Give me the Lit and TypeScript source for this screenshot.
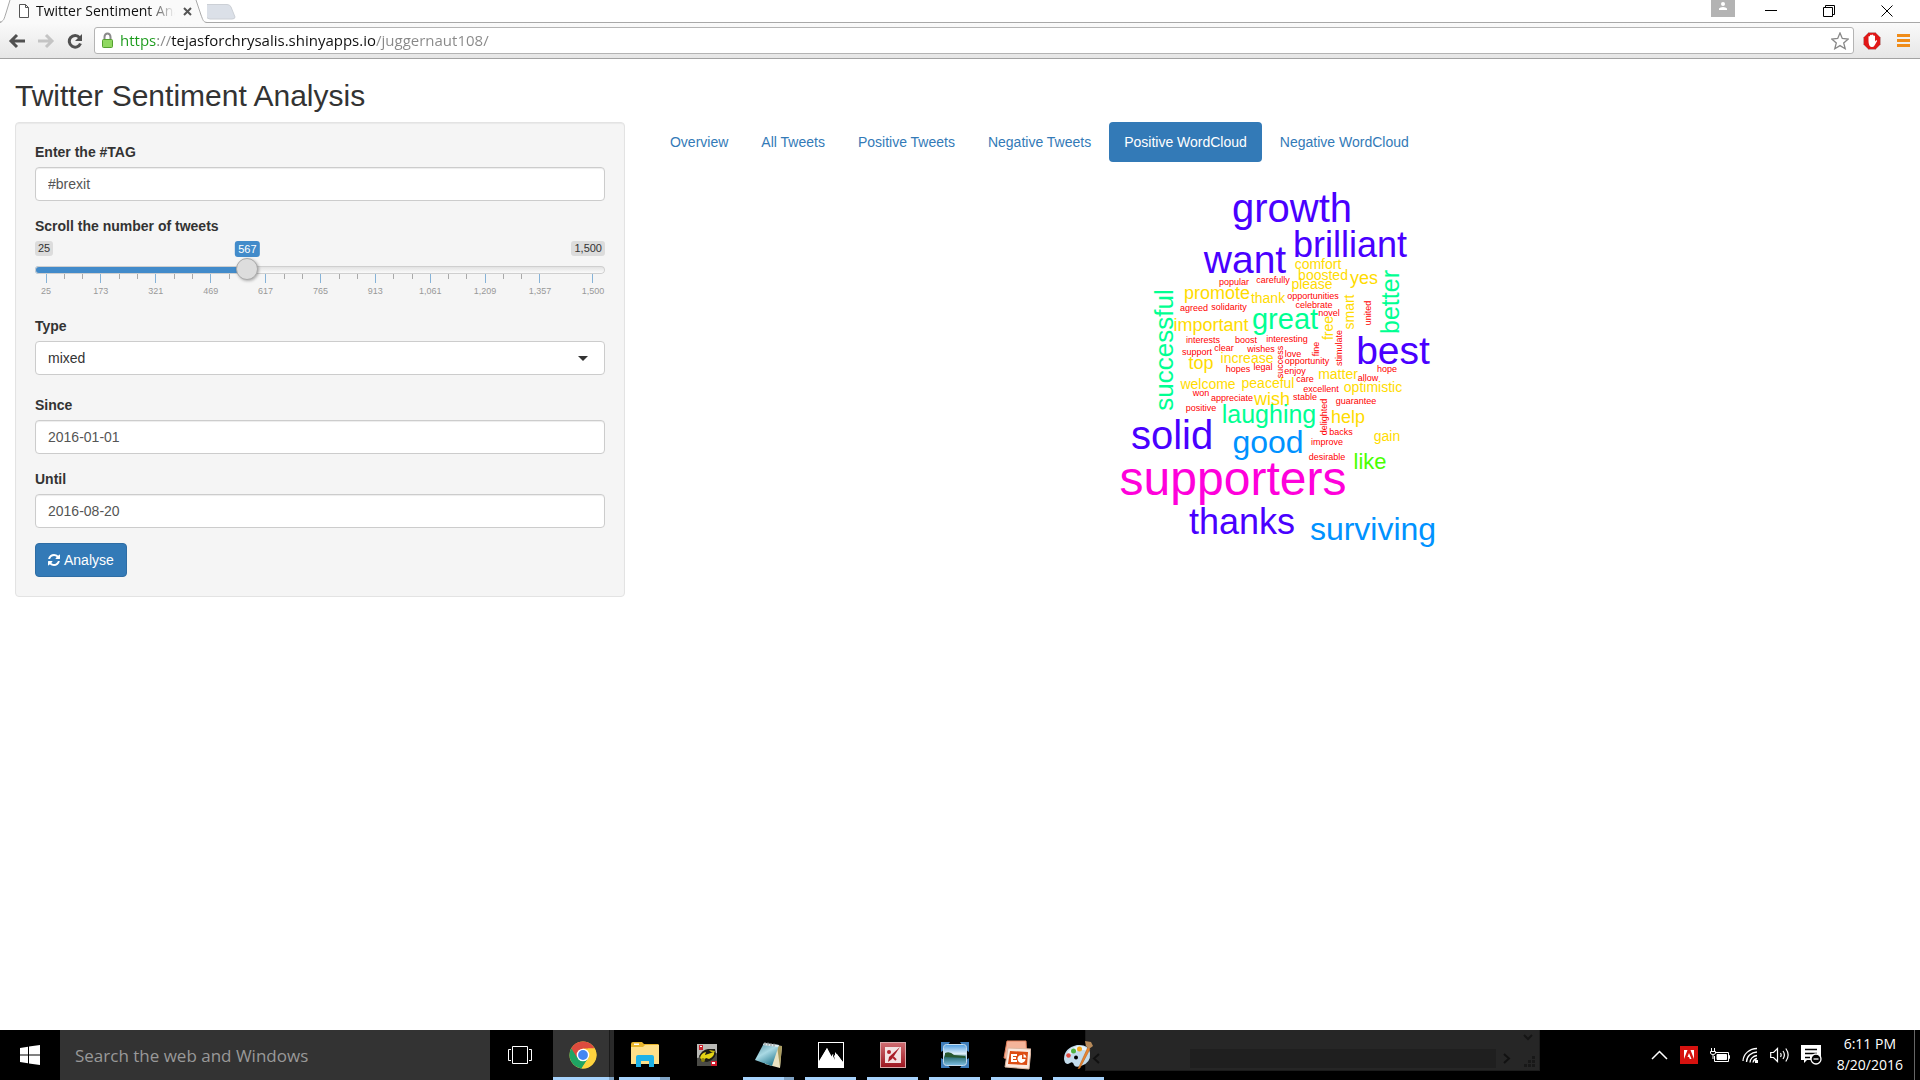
import { LitElement, html, css, svg } from "lit";
import { customElement, state } from "lit/decorators.js";

type Word = [text: string, x: number, y: number, size: number, upright?: boolean];

/* Words grouped by frequency colour; upright words read bottom to top. */
const CLOUD: { color: string; words: Word[] }[] = [
  { color: "#ff00db", words: [["supporters", 1233, 495, 48]] },
  {
    color: "#4900ff",
    words: [
      ["growth", 1292, 222, 40],
      ["brilliant", 1350, 257, 36],
      ["want", 1245, 273, 39],
      ["best", 1393, 364, 39],
      ["solid", 1172, 449, 40],
      ["thanks", 1242, 534, 36],
    ],
  },
  { color: "#0092ff", words: [["good", 1268, 453, 32], ["surviving", 1373, 540, 32]] },
  {
    color: "#00ff92",
    words: [
      ["laughing", 1269, 423, 25],
      ["great", 1285, 329, 29],
      ["successful", 1173, 350, 26, true],
      ["better", 1399, 302, 25, true],
    ],
  },
  { color: "#49ff00", words: [["like", 1370, 469, 22]] },
  {
    color: "#ffdb00",
    words: [
      ["help", 1348, 423, 18],
      ["wish", 1272, 405, 18],
      ["yes", 1364, 284, 18],
      ["top", 1201, 369, 18],
      ["promote", 1217, 299, 18],
      ["important", 1211, 331, 18],
      ["thank", 1268, 303, 14],
      ["comfort", 1318, 269, 14],
      ["boosted", 1323, 280, 14],
      ["please", 1312, 289, 14],
      ["increase", 1247, 363, 14],
      ["smart", 1354, 312, 14, true],
      ["free", 1333, 328, 14, true],
      ["matter", 1338, 379, 14],
      ["optimistic", 1373, 392, 14],
      ["welcome", 1208, 389, 14],
      ["peaceful", 1268, 388, 14],
      ["gain", 1387, 441, 14],
    ],
  },
  {
    color: "#ff0000",
    words: [
      ["popular", 1234, 285, 9],
      ["carefully", 1273, 283, 9],
      ["opportunities", 1313, 299, 9],
      ["celebrate", 1314, 308, 9],
      ["agreed", 1194, 311, 9],
      ["solidarity", 1229, 310, 9],
      ["novel", 1329, 316, 9],
      ["interests", 1203, 343, 9],
      ["boost", 1246, 343, 9],
      ["interesting", 1287, 342, 9],
      ["support", 1197, 355, 9],
      ["clear", 1224, 351, 9],
      ["wishes", 1261, 352, 9],
      ["love", 1293, 357, 9],
      ["opportunity", 1307, 364, 9],
      ["fine", 1319, 349, 9, true],
      ["stimulate", 1342, 348, 9, true],
      ["united", 1371, 313, 9, true],
      ["success", 1283, 362, 9, true],
      ["hopes", 1238, 372, 9],
      ["legal", 1263, 370, 9],
      ["enjoy", 1295, 374, 9],
      ["care", 1305, 382, 9],
      ["hope", 1387, 372, 9],
      ["allow", 1368, 381, 9],
      ["excellent", 1321, 392, 9],
      ["won", 1201, 396, 9],
      ["appreciate", 1232, 401, 9],
      ["stable", 1305, 400, 9],
      ["positive", 1201, 411, 9],
      ["guarantee", 1356, 404, 9],
      ["delighted", 1327, 417, 9, true],
      ["backs", 1341, 435, 9],
      ["improve", 1327, 445, 9],
      ["desirable", 1327, 460, 9],
    ],
  },
];

const MIN = 25;
const MAX = 1500;
const STEP = 148;

@customElement("browser-chrome")
class BrowserChrome extends LitElement {
  static styles = css`
    :host {
      display: block;
      font-family: "Segoe UI", "Open Sans", "Noto Sans", sans-serif;
    }
    svg { display: block; flex: none; }
    button {
      border: 0;
      padding: 0;
      background: none;
      display: grid;
      place-items: center;
    }
    .strip {
      display: flex;
      height: 22px;
      background: #fff;
      border-bottom: 1px solid #a8a8a8;
    }
    .tab {
      position: relative;
      width: 207px;
      height: 23px;
    }
    .tab-shape { position: absolute; inset: 0; }
    .tab-row {
      position: relative;
      display: flex;
      align-items: center;
      height: 22px;
      padding: 0 14px 0 18px;
      gap: 6px;
    }
    .tab-title {
      flex: 1;
      overflow: hidden;
      white-space: nowrap;
      font-size: 14px;
      line-height: 22px;
      color: #111;
      -webkit-mask-image: linear-gradient(90deg, #000 80%, transparent);
      mask-image: linear-gradient(90deg, #000 80%, transparent);
    }
    .tab-close { width: 12px; height: 22px; }
    .window-controls {
      display: flex;
      margin-left: auto;
      padding-right: 4px;
    }
    .profile { width: 24px; height: 17px; background: #b3b3b3; margin-right: 7px; }
    .ctl { width: 58px; height: 22px; }
    .bar {
      display: flex;
      align-items: center;
      height: 35px;
      padding: 0 6px 0 8px;
      background: linear-gradient(#fafafa, #e6e6e6);
      border-bottom: 1px solid #a3a3a3;
    }
    .nav { display: flex; gap: 11px; margin-right: 10px; }
    .nav button { width: 18px; height: 22px; }
    .omnibox {
      flex: 1;
      display: flex;
      align-items: center;
      gap: 6px;
      height: 25px;
      padding: 0 4px 0 6px;
      background: #fff;
      border: 1px solid #b4b4b4;
      border-radius: 3px;
    }
    .url {
      flex: 1;
      min-width: 0;
      height: 25px;
      border: 0;
      padding: 0;
      outline: 0;
      font: 15px/25px "Segoe UI", "Open Sans", "Noto Sans", sans-serif;
      color: transparent;
      background: linear-gradient(90deg, #1a9a1a 37px, #888 37px 51px, #111 51px 255px, #888 255px);
      -webkit-background-clip: text;
      background-clip: text;
    }
    .extras { display: flex; gap: 12px; margin-left: 8px; }
    .extras button { width: 20px; height: 22px; }
  `;

  render() {
    return html`
      <div class="strip">
        <div class="tab">
          <svg class="tab-shape" width="207" height="23" viewBox="0 0 207 23">
            <path d="M0 23C4 22 4 19 6 13L10 0H196L201 15C203 20 203 22 207 23Z" fill="#fafafa" />
            <path d="M0 22C4 21 4 19 6 13L10 0M196 0L201 15C203 20 203 22 207 22.500" fill="none" stroke="#a8a8a8" />
          </svg>
          <div class="tab-row">
            <svg width="12" height="16" viewBox="0 0 12 16" fill="#fff" stroke="#555">
              <path d="M1.500 1.500H7.500L10.500 4.500V14.500H1.500ZM7.500 1.500V4.500H10.500" />
            </svg>
            <span class="tab-title">Twitter Sentiment Analysis</span>
            <button class="tab-close" aria-label="Close tab">
              <svg width="9" height="9" viewBox="0 0 9 9" stroke="#555" stroke-width="2"><path d="M1 1L8 8M8 1L1 8" /></svg>
            </button>
          </div>
        </div>
        <button aria-label="New tab">
          <svg width="30" height="18" viewBox="5 1 30 18">
            <path d="M1 3.500H25Q28 3.500 29 6L33 16Q33 18 30 18H8Q5 18 4 15L1 5Z" fill="#dbe0e8" stroke="#ccd0d6" />
          </svg>
        </button>
        <div class="window-controls">
          <button class="profile" aria-label="Profile">
            <svg width="24" height="17" viewBox="0 0 24 17" fill="#fff"><circle cx="12" cy="4" r="2" /><path d="M8 10V8.500Q9 7 12 7T16 8.500V10Z" /></svg>
          </button>
          <button class="ctl" aria-label="Minimize">
            <svg width="12" height="12" viewBox="0 0 12 12"><path d="M0 5.500H12" stroke="#000" /></svg>
          </button>
          <button class="ctl" aria-label="Restore">
            <svg width="12" height="12" viewBox="0 0 12 12" fill="none" stroke="#000"><path d="M.5 2.500H9.500V11.500H.5ZM2.500 2.500V.5H11.500V9.500H9.500" /></svg>
          </button>
          <button class="ctl" aria-label="Close">
            <svg width="12" height="12" viewBox="0 0 12 12" stroke="#000"><path d="M.5 .5L11.500 11.500M11.500 .5L.5 11.500" /></svg>
          </button>
        </div>
      </div>
      <div class="bar">
        <div class="nav">
          <button aria-label="Back">
            <svg width="18" height="16" viewBox="0 0 18 16" fill="none" stroke="#505050" stroke-width="3"><path d="M17 8H4M9 2L3 8L9 14" /></svg>
          </button>
          <button aria-label="Forward">
            <svg width="18" height="16" viewBox="0 0 18 16" fill="none" stroke="#c4c4c4" stroke-width="3"><path d="M1 8H14M9 2L15 8L9 14" /></svg>
          </button>
          <button aria-label="Reload">
            <svg width="18" height="16" viewBox="0 0 18 16" fill="none"><path d="M13.500 4.500A5.800 5.800 0 1 0 14.500 10.500" stroke="#505050" stroke-width="3" /><path d="M16 1V8H9Z" fill="#505050" /></svg>
          </button>
        </div>
        <div class="omnibox">
          <svg width="13" height="17" viewBox="0 0 13 17">
            <path d="M3.500 8V5A3 3.500 0 0 1 9.500 5V8" fill="none" stroke="#8a8a8a" stroke-width="2" />
            <rect x="1.500" y="7.500" width="10" height="8" rx="1" fill="#8fd860" stroke="#55a030" />
          </svg>
          <input class="url" type="text" aria-label="Address" spellcheck="false" .value=${"https://tejasforchrysalis.shinyapps.io/juggernaut108/"} />
          <svg width="18" height="18" viewBox="0 0 18 18" fill="none" stroke="#888" stroke-width="1.300">
            <path d="M9 1L11.300 6.500L17.200 7L12.700 10.900L14.200 16.700L9 13.600L3.800 16.700L5.300 10.900L.8 7L6.700 6.500Z" />
          </svg>
        </div>
        <div class="extras">
          <button aria-label="Ad blocker">
            <svg width="18" height="18" viewBox="0 0 18 18">
              <path d="M5.500 .5H12.500L17.500 5.500V12.500L12.500 17.500H5.500L.5 12.500V5.500Z" fill="#e01818" stroke="#c9a0a0" />
              <path d="M5.500 9V4.500Q6.200 3.500 7 4.500V3.200Q7.800 2.200 8.600 3.200V2.800Q9.500 2 10.300 3V3.700Q11.200 3 12 4V9.500L13 8.300Q14.500 8 14 9.300L11.500 13.500Q10.500 15.300 8.500 15Q5.500 14.500 5.500 9Z" fill="#fff" />
            </svg>
          </button>
          <button aria-label="Menu">
            <svg width="14" height="14" viewBox="0 0 14 14" fill="#f08c18"><path d="M0 0H13V3H0ZM0 5H13V8H0ZM0 10H13V13H0Z" /></svg>
          </button>
        </div>
      </div>
    `;
  }
}

@customElement("tweet-slider")
class TweetSlider extends LitElement {
  static styles = css`
    :host { display: block; }
    .label { display: block; margin-bottom: 5px; font-weight: 700; }
    .box { position: relative; height: 60px; }
    .ends { display: flex; justify-content: space-between; height: 17px; align-items: flex-start; }
    .badge {
      padding: 0 3px;
      border-radius: 3px;
      font-size: 11px;
      line-height: 15px;
      color: #333;
      background: #dcdcdc;
    }
    .value {
      position: absolute;
      top: 0;
      transform: translateX(-50%);
      line-height: 16px;
      color: #fff;
      background: #428bca;
    }
    .range {
      -webkit-appearance: none;
      appearance: none;
      display: block;
      width: 100%;
      height: 22px;
      margin: 0;
      background: none;
      position: relative;
    }
    .range::-webkit-slider-runnable-track {
      height: 8px;
      margin-top: 1px;
      border-radius: 8px;
      box-shadow: inset 0 0 0 1px #cfcfcf;
      background: linear-gradient(90deg, #428bca var(--fill), transparent var(--fill)), linear-gradient(#dedede, #fff);
    }
    .range::-webkit-slider-thumb {
      -webkit-appearance: none;
      width: 22px;
      height: 22px;
      margin-top: -8px;
      border: 1px solid #aaa;
      border-radius: 50%;
      background: #ddd;
      box-shadow: 1px 1px 3px rgba(0, 0, 0, 0.3);
    }
    .grid { padding: 0 12px 0 11px; margin-top: -6px; }
    .grid svg { display: block; width: 100%; height: 24px; overflow: visible; }
    .minor { stroke: #aaa; }
    .major { stroke: #86b3d8; }
    .tick { font-size: 9px; fill: #999; text-anchor: middle; }
  `;

  @state() private value = 567;

  private at(v: number) {
    return `${((v - MIN) / (MAX - MIN)) * 100}%`;
  }

  render() {
    const f = (this.value - MIN) / (MAX - MIN);
    const pos = `calc(11px + (100% - 22px) * ${f})`;
    const stops = [...Array.from({ length: 10 }, (_, i) => MIN + i * STEP), MAX];
    const minors = stops.slice(0, 9).flatMap((s) => [s + STEP * 0.34, s + STEP * 0.67]);
    return html`
      <label class="label" for="count">Scroll the number of tweets</label>
      <div class="box">
        <div class="ends"><span class="badge">25</span><span class="badge">1,500</span></div>
        <span class="badge value" style="left:${pos}">${this.value}</span>
        <input class="range" id="count" type="range" min=${MIN} max=${MAX}
          .value=${String(this.value)} style="--fill:${pos}"
          @input=${(e: Event) => (this.value = Number((e.target as HTMLInputElement).value))} />
        <div class="grid">
          <svg shape-rendering="crispEdges">
            ${minors.map((m) => svg`<line class="minor" x1=${this.at(m)} x2=${this.at(m)} y1="0" y2="5" />`)}
            ${stops.map(
              (s) => svg`<line class="major" x1=${this.at(s)} x2=${this.at(s)} y1="0" y2="9" />
              <text class="tick" x=${this.at(s)} y="20">${s.toLocaleString("en-US")}</text>`,
            )}
          </svg>
        </div>
      </div>
    `;
  }
}

@customElement("word-cloud")
class WordCloud extends LitElement {
  static styles = css`
    :host { display: block; }
    svg { display: block; width: 100%; height: 400px; }
    text { text-anchor: middle; font-family: "Liberation Sans", Helvetica, Arial, sans-serif; }
  `;

  render() {
    return html`
      <svg viewBox="655 162 1250 400" role="img" aria-label="Positive words">
        ${CLOUD.map(
          (g) => svg`<g fill=${g.color}>${g.words.map(
            ([t, x, y, size, up]) =>
              svg`<text font-size=${size} transform="translate(${x} ${y})${up ? " rotate(-90)" : ""}">${t}</text>`,
          )}</g>`,
        )}
      </svg>
    `;
  }
}

const CHROME_ICON = svg`<svg width="28" height="28" viewBox="0 0 28 28">
  <circle cx="14" cy="14" r="13.500" fill="#fdd23e"/>
  <path d="M14 14L2.300 7.250A13.500 13.500 0 0 0 12.500 27.400L20 16Z" fill="#1fa463"/>
  <path d="M2.300 7.250A13.500 13.500 0 0 1 25.700 7.500H14L8 16.500Z" fill="#dd4b3e"/>
  <path d="M25.700 7.500A13.500 13.500 0 0 1 12.500 27.400L19.500 17L19 7.500Z" fill="#fdd23e"/>
  <circle cx="14" cy="14" r="6.300" fill="#fff"/><circle cx="14" cy="14" r="4.900" fill="#4487f2"/></svg>`;

const FOLDER_ICON = svg`<svg width="28" height="26" viewBox="0 0 28 26">
  <path d="M0 2Q0 0 2 0H11L13 2H27Q28 2 28 4V22H0Z" fill="#e8b52c"/>
  <path d="M3 1.500H8V3H3Z" fill="#fff"/><path d="M0 5H12L14 3H28V22H0Z" fill="#ffe08a"/>
  <path d="M5 25V15Q5 13 7 13H21Q23 13 23 15V25H18V19H10V25Z" fill="#1fb2e8"/></svg>`;

const CAR_ICON = svg`<svg width="20" height="22" viewBox="0 0 20 22">
  <rect width="20" height="22" fill="#b9b9b5"/><path d="M0 14L20 9V22H0Z" fill="#4b4b46"/>
  <path d="M2 12Q5 6 11 5L18 5L19 10Q17 16 10 18L4 17Z" fill="#1d1d15"/>
  <path d="M3 14Q4 9 9 8L8 11L17 8Q18 12 12 15L9 14L6 17Z" fill="#e3d414"/>
  <path d="M12 6L18 7L17 9L14 8Z" fill="#c8ba10"/><circle cx="6" cy="16" r="2" fill="#8f860f"/>
  <path d="M2 1H6V6H2Z" fill="#c8202a"/><path d="M3 2H5V3H3Z" fill="#fff"/><path d="M14 17H20V22H14Z" fill="#d01a2c"/><path d="M15 18H18V20H15Z" fill="#fff"/></svg>`;

const NOTEPAD_ICON = svg`<svg width="28" height="28" viewBox="0 0 28 28">
  <defs><linearGradient id="np" x2=".6" y2="1"><stop stop-color="#4f8b9d"/><stop offset=".5" stop-color="#a9d9e4"/><stop offset="1" stop-color="#2f8096"/></linearGradient></defs>
  <path d="M12 3L27 5L25 27L10 23Z" fill="#e9e2c2"/><path d="M22 5L27 5L25 26Z" fill="#a99b5e"/>
  <path d="M9 2L24 4L17 25L0 19Z" fill="url(#np)"/><path d="M9 2L24 4L23 6L8 4Z" fill="#dfe9ec"/>
  <path d="M10 1V4M13 1.500V4.500M16 2V5M19 2.500V5.500" stroke="#888"/></svg>`;

const MOUNTAIN_ICON = svg`<svg width="26" height="26" viewBox="0 0 26 26">
  <rect width="26" height="26" fill="#fff"/><path d="M1 1H25V20L19 11L17 14L15 12L13 15L9 6L1 19Z" fill="#000"/>
  <path d="M1 20L9 6L14 15L15 12L24 23V25H1Z" fill="#fff"/><path d="M15 14L17 18L15.500 12L19 12L25 20V9H15Z" fill="#000"/>
  <path d="M17 10L25 20V22L17 14Z" fill="#fff"/></svg>`;

const TOOLS_ICON = svg`<svg width="26" height="26" viewBox="0 0 26 26">
  <defs><linearGradient id="tl" x2="0" y2="1"><stop stop-color="#cf6d72"/><stop offset="1" stop-color="#9c1620"/></linearGradient></defs>
  <rect x=".5" y=".5" width="25" height="25" fill="url(#tl)" stroke="#d9a9ab"/><rect x="5" y="5" width="16" height="16" fill="#f3e3e3"/>
  <path d="M20 5L12 17L8 20L9 15Z" fill="#a81e28"/><circle cx="9" cy="10" r="2" fill="#b3242e"/>
  <path d="M13 15L16 18" stroke="#b3242e" stroke-width="2"/></svg>`;

const PHOTO_ICON = svg`<svg width="28" height="26" viewBox="0 0 28 26">
  <defs><linearGradient id="ph" x2="0" y2="1"><stop stop-color="#4c9be0"/><stop offset=".45" stop-color="#e4f2fa"/><stop offset=".6" stop-color="#2c6e73"/><stop offset="1" stop-color="#7fc0e6"/></linearGradient></defs>
  <path d="M0 0H9L7 3H3V8L0 10ZM28 0H19L21 3H25V8L28 10ZM0 26H9L7 23H3V18L0 16ZM28 26H19L21 23H25V18L28 16Z" fill="#3d7cba"/>
  <rect x="2.500" y="2.500" width="23" height="21" rx="3" fill="url(#ph)" stroke="#c6dcec"/>
  <path d="M4 15V11Q9 9 13 13L24 14V16Z" fill="#28582f"/></svg>`;

const SLIDES_ICON = svg`<svg width="28" height="30" viewBox="0 0 28 30">
  <path d="M4 1L23 1L24 22L1 18Z" fill="#f4b49a" stroke="#e5825e"/><path d="M5 8L28 9L26 29L2 27Z" fill="#fbe9df" stroke="#dcb7a2"/>
  <path d="M7 11L25 12L24 25L5 24Z" fill="#dd4d14"/><path d="M8 14H14V16H10V17H13V19H10V20H14V22H8Z" fill="#fff"/>
  <path d="M19 15A4 4 0 1 0 22.500 19H19Z" fill="#fff"/><path d="M20.500 14V17.500H23.500Q23 14.500 20.500 14Z" fill="#fff"/></svg>`;

const PAINT_ICON = svg`<svg width="30" height="28" viewBox="0 0 30 28">
  <path d="M13 4Q25 3 26 12Q27 22 17 25Q11 27 10 24Q9 20 6 22Q1 25 0 18Q0 7 13 4Z" fill="#c3dcec"/>
  <path d="M13 5Q22 4 24 10Q14 6 2 17Q3 8 13 5Z" fill="#e6f3fa"/>
  <circle cx="12" cy="16.500" r="2" fill="#000"/><circle cx="4.500" cy="14.500" r="2.300" fill="#e04a3f"/>
  <circle cx="9.500" cy="10" r="2.500" fill="#4fb341"/><circle cx="15.500" cy="8" r="2.500" fill="#f4a71c"/>
  <path d="M24 6L14 28L16 27L26 8Z" fill="#e98530" stroke="#b9631c" stroke-width=".6"/><path d="M21 0L27 1L29 5L25 8L22 5Z" fill="#b78a5a"/></svg>`;

const APPS: { name: string; icon: unknown; state: string }[] = [
  { name: "Chrome", icon: CHROME_ICON, state: "active" },
  { name: "File Explorer", icon: FOLDER_ICON, state: "open multi" },
  { name: "Game", icon: CAR_ICON, state: "" },
  { name: "Notepad", icon: NOTEPAD_ICON, state: "open multi" },
  { name: "Photos", icon: MOUNTAIN_ICON, state: "open" },
  { name: "Tools", icon: TOOLS_ICON, state: "open" },
  { name: "Picture viewer", icon: PHOTO_ICON, state: "open" },
  { name: "Slides", icon: SLIDES_ICON, state: "open" },
  { name: "Paint", icon: PAINT_ICON, state: "open" },
];

@customElement("task-bar")
class TaskBar extends LitElement {
  static styles = css`
    :host {
      display: flex;
      position: relative;
      height: 50px;
      background: #000;
      color: #fff;
      font-family: "Segoe UI", "Open Sans", "Noto Sans", sans-serif;
    }
    svg { display: block; }
    button {
      display: grid;
      place-items: center;
      border: 0;
      padding: 0;
      background: none;
      position: relative;
      color: inherit;
      font: inherit;
    }
    .start { width: 60px; }
    .search {
      width: 430px;
      box-sizing: border-box;
      border: 0;
      padding: 0 15px;
      background: #333;
      font: 17px "Segoe UI", "Open Sans", "Noto Sans", sans-serif;
      outline: 0;
    }
    .search::placeholder { color: #999; opacity: 1; }
    .slot { width: 62px; border-bottom: 3px solid transparent; padding-top: 3px; }
    .open { background: linear-gradient(#a6d2fb, #a6d2fb) 5px 47px / 51px 3px no-repeat border-box; }
    .multi {
      background: linear-gradient(90deg, #a6d2fb 41px, #7fa3c4 41px) 5px 47px / 51px 3px no-repeat border-box;
    }
    .active {
      background:
        linear-gradient(90deg, transparent 1px, #a6d2fb 1px 57px, #7fa3c4 57px) 0 47px / 100% 3px no-repeat border-box,
        linear-gradient(90deg, transparent 1px, #343434 1px 57px, #1a1a1a 57px 58px, #292929 58px) border-box;
    }
    .ghost { position: absolute; left: 1085px; top: 0; }
    .tray { display: flex; align-items: center; margin-left: auto; }
    .tray button { height: 50px; }
    .icons { display: flex; align-items: center; gap: 12px; margin-right: 15px; }
    .tray .clock {
      align-content: center;
      font-size: 14px;
      line-height: 21px;
      padding-bottom: 2px;
      margin-right: 11px;
    }
    .peek { width: 5px; height: 50px; border-left: 1px solid #666; }
  `;

  render() {
    return html`
      <svg class="ghost" width="455" height="41" viewBox="0 0 455 41" fill="none">
        <rect width="455" height="41" fill="#1c1c1c" /><rect x="1" width="453" height="40" fill="#262626" />
        <rect x="105" y="19" width="306" height="19" fill="#1f1f1f" />
        <path d="M14 24L9 28.500L14 33M419 24L424 28.500L419 33" stroke="#111" stroke-width="2" />
        <path d="M439 5L443 9L447 5" stroke="#151515" stroke-width="2" />
        <path d="M447 26h3v3h-3zM443 30h3v3h-3zM447 30h3v3h-3zM439 34h3v3h-3zM443 34h3v3h-3zM447 34h3v3h-3z" fill="#181818" />
      </svg>
      <button class="start" aria-label="Start">
        <svg width="20" height="20" viewBox="0 0 20 20" fill="#fff"><path d="M0 3L8 1.800V9.500H0ZM9 1.600L20 0V9.500H9ZM0 10.500H8V18.200L0 17ZM9 10.500H20V20L9 18.400Z" /></svg>
      </button>
      <input class="search" type="text" placeholder="Search the web and Windows" aria-label="Search the web and Windows" />
      <button class="slot" aria-label="Task view">
        <svg width="26" height="18" viewBox="1 0 26 18" fill="none" stroke="#fff"><path d="M5.500 .5H20.500V17.500H5.500ZM4 3.500H1.500V14.500H4M22 3.500H24.500V14.500H22" /></svg>
      </button>
      ${APPS.map((a) => html`<button class="slot ${a.state}" aria-label=${a.name}>${a.icon}</button>`)}
      <div class="tray">
        <div class="icons">
          <button aria-label="Show hidden icons">
            <svg width="17" height="10" viewBox="0 0 17 10" fill="none" stroke="#fff" stroke-width="1.500"><path d="M1 9L8.500 1.500L16 9" /></svg>
          </button>
          <button aria-label="Adobe updater">
            <svg width="18" height="18" viewBox="0 0 18 18"><rect width="18" height="18" fill="#d6120f" /><path d="M4 4H7.500L4 13ZM10.500 4H14V13ZM9 7L11.500 13H9.800L9 11H7.500Z" fill="#fff" /></svg>
          </button>
          <button aria-label="Battery">
            <svg width="20" height="15" viewBox="0 0 20 15" fill="none" stroke="#fff"><path d="M6 4.500H18.500V13.500H4.500V8M18.500 7.500H19.500V10.500H18.500M1.500 0V3M4.500 0V3M.5 3.500H5.500V5Q5.500 6.500 3 6.500T.5 5ZM3 7V11" /><path d="M7 6.500H16.500V11.500H7Z" fill="#fff" /></svg>
          </button>
          <button aria-label="Wi-Fi">
            <svg width="16" height="16" viewBox="0 0 16 16" fill="none" stroke="#fff" stroke-width="1.300"><path d="M1 14A14 13 0 0 1 15 1.500M4.500 15A11 10 0 0 1 15 5M8 15.500A8 7 0 0 1 15 8.500M11 15.500A5 5 0 0 1 15 11.500" /><path d="M13 13h3v3h-3z" fill="#fff" stroke="none" /></svg>
          </button>
          <button aria-label="Volume">
            <svg width="19" height="18" viewBox="0 0 19 18" fill="none" stroke="#fff" stroke-width="1.200"><path d="M.7 6.500H3.500L7.500 2.500V15.500L3.500 11.500H.7ZM10.500 7Q11.800 9 10.500 11M13 5Q15.800 9 13 13M15.800 2.500Q20.500 9 15.800 15.500" /></svg>
          </button>
          <button aria-label="Notifications">
            <svg width="21" height="20" viewBox="0 0 21 20" fill="none"><path d="M0 0H20V15H6L3 18V15H0Z" fill="#fff" /><path d="M4 4.500H16M4 8.500H16M4 12.500H9" stroke="#000" stroke-width="1.500" /><circle cx="15" cy="14" r="5" fill="#000" stroke="#fff" stroke-width="1.300" /><path d="M12.500 14H17.500" stroke="#fff" stroke-width="1.300" /></svg>
          </button>
        </div>
        <button class="clock"><span>6:11 PM</span><span>8/20/2016</span></button>
        <div class="peek"></div>
      </div>
    `;
  }
}

const TABS = ["Overview", "All Tweets", "Positive Tweets", "Negative Tweets", "Positive WordCloud", "Negative WordCloud"];

@customElement("app-root")
class AppRoot extends LitElement {
  static styles = css`
    :host {
      display: flex;
      flex-direction: column;
      min-height: 100vh;
      background: #fff;
      color: #333;
      font: 14px/20px "Liberation Sans", Arial, sans-serif;
    }
    .page { flex: 1; padding: 0 15px; }
    h2 { margin: 20px 0 10px; font-size: 30px; font-weight: 400; line-height: 33px; }
    .columns {
      display: grid;
      grid-template-columns: calc((100% - 60px) / 3) minmax(0, 1fr);
      column-gap: 30px;
      align-items: start;
    }
    .well {
      padding: 19px;
      background: #f5f5f5;
      border: 1px solid #e3e3e3;
      border-radius: 4px;
      box-shadow: inset 0 1px 1px rgba(0, 0, 0, 0.05);
    }
    .field { margin-bottom: 15px; }
    .field-select { margin-bottom: 20px; }
    .label { display: block; margin-bottom: 5px; font-weight: 700; }
    .control {
      display: block;
      box-sizing: border-box;
      width: 100%;
      height: 34px;
      padding: 6px 12px;
      border: 1px solid #ccc;
      border-radius: 4px;
      background: #fff;
      box-shadow: inset 0 1px 1px rgba(0, 0, 0, 0.075);
      color: #555;
      font: inherit;
    }
    .select-wrap { display: grid; align-items: center; }
    .select-wrap > * { grid-area: 1 / 1; }
    .select { appearance: none; -webkit-appearance: none; color: #333; box-shadow: none; }
    .caret { justify-self: end; margin-right: 17px; pointer-events: none; z-index: 1; }
    .analyse {
      display: flex;
      align-items: center;
      gap: 4px;
      height: 34px;
      padding: 0 12px;
      border: 1px solid #2e6da4;
      border-radius: 4px;
      background: #337ab7;
      color: #fff;
      font: inherit;
    }
    .tabs { display: flex; gap: 3px; }
    .pill { padding: 10px 15px; border-radius: 4px; color: #337ab7; text-decoration: none; }
    .pill.current { background: #337ab7; color: #fff; }
  `;

  render() {
    return html`
      <browser-chrome></browser-chrome>
      <main class="page">
        <h2>Twitter Sentiment Analysis</h2>
        <div class="columns">
          <form class="well" @submit=${(e: Event) => e.preventDefault()}>
            <div class="field">
              <label class="label" for="tag">Enter the #TAG</label>
              <input class="control" id="tag" type="text" value="#brexit" />
            </div>
            <tweet-slider class="field"></tweet-slider>
            <div class="field field-select">
              <label class="label" for="type">Type</label>
              <div class="select-wrap">
                <select class="control select" id="type"><option>mixed</option><option>recent</option><option>popular</option></select>
                <svg class="caret" width="10" height="5" viewBox="0 0 10 5"><path d="M0 0H10L5 5Z" fill="#333" /></svg>
              </div>
            </div>
            <div class="field">
              <label class="label" for="since">Since</label>
              <input class="control" id="since" type="text" value="2016-01-01" />
            </div>
            <div class="field">
              <label class="label" for="until">Until</label>
              <input class="control" id="until" type="text" value="2016-08-20" />
            </div>
            <button class="analyse">
              <svg width="12" height="12" viewBox="0 0 1536 1536" fill="currentColor"><path d="M1511 928q0 5-1 7-64 268-268 434.500t-478 166.500q-146 0-282.500-55t-243.500-157l-129 129q-19 19-45 19t-45-19-19-45v-448q0-26 19-45t45-19h448q26 0 45 19t19 45-19 45l-137 137q71 66 161 102t187 36q134 0 250-65t186-179q11-17 53-117 8-23 30-23h192q13 0 22.500 9.500t9.500 22.500zm25-800v448q0 26-19 45t-45 19h-448q-26 0-45-19t-19-45 19-45l138-138q-148-137-349-137-134 0-250 65t-186 179q-11 17-53 117-8 23-30 23h-199q-13 0-22.500-9.500t-9.500-22.500v-7q65-268 270-434.500t480-166.500q146 0 284 55.500t245 156.500l130-129q19-19 45-19t45 19 19 45z" /></svg>
              <span>Analyse</span>
            </button>
          </form>
          <section>
            <nav class="tabs">
              ${TABS.map((t) => html`<a href="#" class="pill ${t === "Positive WordCloud" ? "current" : ""}">${t}</a>`)}
            </nav>
            <word-cloud></word-cloud>
          </section>
        </div>
      </main>
      <task-bar></task-bar>
    `;
  }
}
